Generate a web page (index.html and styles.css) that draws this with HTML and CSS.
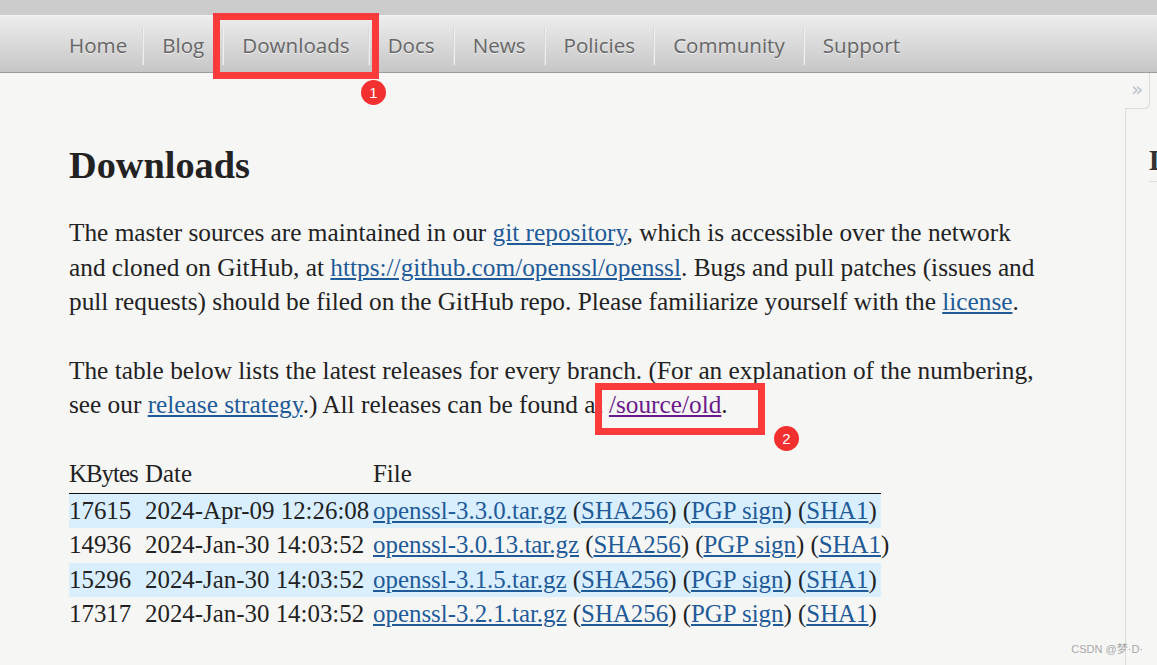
FILE: index.html
```html
<!DOCTYPE html>
<html lang="en">
<head>
<meta charset="utf-8">
<title>Downloads</title>
<link rel="stylesheet" href="styles.css">
</head>
<body>
<div class="topstrip"></div>
<nav class="nav">
  <ul class="menu">
    <li class="item">Home</li>
    <li class="item">Blog</li>
    <li class="item">Downloads</li>
    <li class="item">Docs</li>
    <li class="item">News</li>
    <li class="item">Policies</li>
    <li class="item">Community</li>
    <li class="item">Support</li>
  </ul>
</nav>
<div class="page">
  <main class="main">
    <h1 class="title">Downloads</h1>
    <p class="para">The master sources are maintained in our <a href="#">git repository</a>, which is accessible over the network and cloned on GitHub, at <a href="#">https://github.com/openssl/openssl</a>. Bugs and pull patches (issues and pull requests) should be filed on the GitHub repo. Please familiarize yourself with the <a href="#">license</a>.</p>
    <p class="para">The table below lists the latest releases for every branch. (For an explanation of the numbering, see our <a href="#">release strategy</a>.) All releases can be found at <a class="visited" href="#">/source/old</a>.</p>
    <table class="files">
      <colgroup><col class="c-kb"><col class="c-date"><col class="c-file"></colgroup>
      <thead>
        <tr><th class="h-kb">KBytes</th><th>Date</th><th>File</th></tr>
      </thead>
      <tbody>
        <tr class="odd"><td>17615</td><td>2024-Apr-09 12:26:08</td><td><a href="#">openssl-3.3.0.tar.gz</a> (<a href="#">SHA256</a>) (<a href="#">PGP sign</a>) (<a href="#">SHA1</a>)</td></tr>
        <tr><td>14936</td><td>2024-Jan-30 14:03:52</td><td><a href="#">openssl-3.0.13.tar.gz</a> (<a href="#">SHA256</a>) (<a href="#">PGP sign</a>) (<a href="#">SHA1</a>)</td></tr>
        <tr class="odd"><td>15296</td><td>2024-Jan-30 14:03:52</td><td><a href="#">openssl-3.1.5.tar.gz</a> (<a href="#">SHA256</a>) (<a href="#">PGP sign</a>) (<a href="#">SHA1</a>)</td></tr>
        <tr><td>17317</td><td>2024-Jan-30 14:03:52</td><td><a href="#">openssl-3.2.1.tar.gz</a> (<a href="#">SHA256</a>) (<a href="#">PGP sign</a>) (<a href="#">SHA1</a>)</td></tr>
      </tbody>
    </table>
  </main>
  <aside class="aside">
    <div class="tab">»</div>
    <div class="panel"><h2 class="panel-title">Downloads</h2></div>
  </aside>
</div>
<div class="mark mark-1"></div>
<div class="badge badge-1">1</div>
<div class="mark mark-2"></div>
<div class="badge badge-2">2</div>
<div class="watermark">CSDN @梦·D·</div>
</body>
</html>
```
FILE: styles.css
```css
html, body {
  margin: 0;
  padding: 0;
}
body {
  background: #f6f6f5;
  width: 1157px;
  height: 665px;
  overflow: hidden;
  position: relative;
  font-family: "Liberation Serif", "Times New Roman", serif;
  color: #222;
}
.topstrip {
  height: 15px;
  background: #cccccc;
}
.nav {
  height: 56px;
  background: linear-gradient(#ededed 0%, #dcdcdc 45%, #c6c6c6 100%);
  border-top: 1px solid #f2f2f2;
  border-bottom: 1px solid #9c9c9c;
  box-sizing: content-box;
}
.menu {
  list-style: none;
  margin: 0;
  padding: 4px 0 0 50px;
  height: 100%;
  box-sizing: border-box;
  display: flex;
  align-items: center;
}
.item {
  font-family: "Open Sans", "Noto Sans", sans-serif;
  font-size: 20.6px;
  color: #666;
  text-shadow: 0 1px 0 rgba(255,255,255,0.6);
  padding: 0 18px 0 19px;
  height: 38px;
  line-height: 36px;
  border-left: 1px solid #d8d8d8;
  box-shadow: inset 1px 0 0 #f0f0f0;
}
.item:first-child {
  border-left: none;
  box-shadow: none;
  padding-right: 15px;
}
.page {
  display: flex;
  height: 592px;
}
.main {
  flex: 1;
  padding: 0 0 0 69px;
  width: 980px;
}
.title {
  font-size: 38.3px;
  font-weight: bold;
  margin: 72px 0 0 0;
  line-height: 40px;
}
.para {
  font-size: 25.3px;
  line-height: 34.5px;
  margin: 30px 0 0 0;
  width: 975px;
}
.para + .para {
  margin-top: 34px;
}
a {
  color: #1f5b98;
  text-decoration: underline;
}
a.visited {
  color: #6b1a8c;
}
.files {
  margin-top: 35px;
  border-collapse: collapse;
  table-layout: fixed;
  font-size: 24.9px;
  width: 812px;
}
.files th {
  font-weight: normal;
  text-align: left;
  padding: 0 0 2px 0;
  height: 34px;
  border-bottom: 1px solid #111;
  white-space: nowrap;
}
.h-kb {
  letter-spacing: -1px;
}
.files td {
  padding: 0;
  height: 34.5px;
  white-space: nowrap;
}
.files tr.odd td {
  background: #d9effd;
}
.c-kb { width: 76px; }
.c-date { width: 228px; }
.aside {
  width: 32px;
  display: flex;
  flex-direction: column;
  overflow: hidden;
}
.tab {
  width: 24px;
  height: 35px;
  border-right: 1px solid #dcdcdc;
  border-bottom: 1px solid #dcdcdc;
  border-bottom-right-radius: 6px;
  color: #bcc4cc;
  font-family: "DejaVu Sans", sans-serif;
  font-size: 20px;
  text-align: center;
  line-height: 32px;
}
.panel {
  flex: 1;
  border-left: 1px solid #dcdcdc;
  margin-top: -1px;
  padding-left: 23px;
  white-space: nowrap;
}
.panel-title {
  font-size: 29px;
  font-weight: bold;
  margin: 36px 0 0 0;
  padding-bottom: 4px;
  border-bottom: 1px solid #ddd;
  color: #333;
}
.mark {
  position: absolute;
  border: 7px solid #fb3b3b;
  box-sizing: border-box;
}
.mark-1 {
  left: 213px;
  top: 13px;
  width: 166px;
  height: 66px;
}
.mark-2 {
  left: 595px;
  top: 383px;
  width: 170px;
  height: 52px;
}
.badge {
  position: absolute;
  width: 25px;
  height: 25px;
  border-radius: 50%;
  background: #f23030;
  color: #fff;
  font-family: "Liberation Sans", Arial, sans-serif;
  font-size: 15px;
  line-height: 25px;
  text-align: center;
}
.badge-1 { left: 361px; top: 80px; }
.badge-2 { left: 774px; top: 426px; }
.watermark {
  position: absolute;
  right: 14px;
  bottom: 9px;
  font-family: "Liberation Sans", "Noto Sans CJK SC", sans-serif;
  font-size: 11px;
  color: #a8a8a8;
}
```
